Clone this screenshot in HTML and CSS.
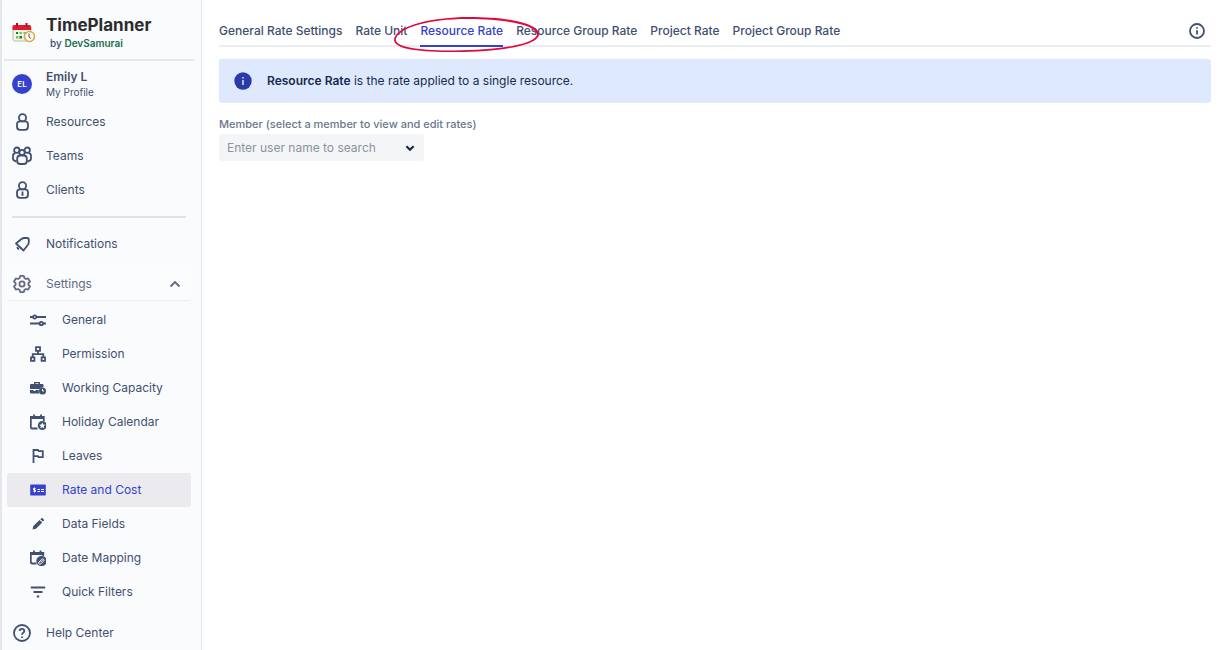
FILE: index.html
```html
<!DOCTYPE html>
<html lang="en">
<head>
  <meta charset="UTF-8" />
  <meta name="viewport" content="width=device-width, initial-scale=1.0"/>
  <title>TimePlanner</title>
  <link rel="stylesheet" href="styles.css">
</head>
<body>
  <div class="app">
    <aside class="sidebar">
      <header class="brand">
        <svg class="icon logo" viewBox="0 0 24 22">
          <rect x="1" y="4" width="18" height="15" rx="1.5" fill="#f5f3ea" stroke="#b9bcae"/>
          <path d="M.5 8V4.500q0-1.500 1.500-1.500h15.500q1.500 0 1.500 1.500V8z" fill="#e0192d"/>
          <path d="M5 1v3.500M14.500 1v3.500" stroke="#a80f20" stroke-width="2"/>
          <path d="M7.500 10h2.500v2H7.500zM11.500 10h2.500v2h-2.500zM4 14h2.500v2.500H4z" fill="#5fd068"/>
          <path d="M4 10h2v2H4zM7.500 14h2.500v2.500H7.500z" fill="#1d7a33"/>
          <circle cx="17.500" cy="14.500" r="5" fill="#fffdf5" stroke="#dda94f" stroke-width="1.600"/>
          <path d="M17 11.500v3.500l2 1.500" fill="none" stroke="#555" stroke-width="1"/>
        </svg>
        <div>
          <h1>TimePlanner</h1>
          <p class="by">by <a href="#">DevSamurai</a></p>
        </div>
      </header>

      <a class="profile" href="#">
        <span class="avatar">EL</span>
        <span class="profile-text">
          <strong>Emily L</strong>
          <small>My Profile</small>
        </span>
      </a>

      <nav class="menu">
        <a href="#">
          <svg class="icon line" viewBox="0 0 20 20"><circle cx="10.500" cy="5.800" r="3.600"/><rect x="5" y="9.300" width="11" height="8.500" rx="3"/></svg>
          Resources
        </a>
        <a href="#">
          <svg class="icon line" viewBox="0 0 20 20"><circle cx="4.800" cy="4.200" r="2.700"/><circle cx="15.200" cy="4.200" r="2.700"/><path d="M4.500 15.500C2 15 1 14 1 12.500V10q0-2.500 2.500-2.800M15.500 15.500c2.500-.5 3.500-1.500 3.500-3V10q0-2.500-2.500-2.800"/><circle cx="10" cy="6.500" r="2.700"/><rect x="5.200" y="9.500" width="9.600" height="8.500" rx="3"/></svg>
          Teams
        </a>
        <a href="#">
          <svg class="icon line" viewBox="0 0 20 20"><circle cx="10.500" cy="5.800" r="3.600"/><rect x="5" y="9.300" width="11" height="8.500" rx="3"/><path d="M10.500 11.500v3M9.500 14.800h2"/></svg>
          Clients
        </a>
      </nav>

      <hr>

      <nav class="menu extra">
        <a href="#">
          <svg class="icon line" viewBox="0 0 20 20"><path stroke-linejoin="round" d="M4 9.500 9.500 5q1.300-1 3-1H15q1.800 0 1.800 1.800V8q0 1.500-.9 2.800L11.500 16.500z"/><path d="M5.200 13.200q.2 1.800 2 2"/></svg>
          Notifications
        </a>
      </nav>

      <button class="settings" type="button" aria-expanded="true">
        <svg class="icon line" viewBox="0 0 20 20"><path stroke-linejoin="round" d="M8.200 1.900h3.600l.6 2.200 1.500.9 2.200-.6 1.900 3.100-1.600 1.600v1.800l1.600 1.600-1.900 3.100-2.200-.6-1.500.9-.6 2.200H8.200l-.6-2.200-1.500-.9-2.200.6L2 12.500l1.600-1.600V9.100L2 7.500l1.900-3.100 2.200.6 1.500-.9z"/><circle cx="10" cy="10" r="2.600"/></svg>
        <span>Settings</span>
        <svg class="icon line chevron" viewBox="0 0 12 12"><path d="m1.500 8.500 4.500-4.500 4.500 4.500"/></svg>
      </button>

      <nav class="menu submenu">
        <a href="#">
          <svg class="icon line" viewBox="0 0 16 16"><path d="M0 5h3M6.500 5H16M0 11.500h9.500M13 11.500h3"/><circle cx="4.700" cy="5" r="1.700"/><circle cx="11.300" cy="11.500" r="1.700"/></svg>
          General
        </a>
        <a href="#">
          <svg class="icon line" viewBox="0 0 16 16"><path d="M6 1.200h4v3.600H6zM1 11.400h3.400v3.400H1zM11.600 11.400H15v3.400h-3.400zM8 4.800v3.400M2.700 11.400V8.200h10.600v3.200"/></svg>
          Permission
        </a>
        <a href="#">
          <svg class="icon solid" viewBox="0 0 16 16"><path d="M4 4V2h6v2h2.500q1 0 1 1v2.200q-2.500-.4-3.900 1.800H0V5q0-1 1-1zM5.500 4h3v-.8h-3zM0 10h3.500v1h2v-1h3.300q-.4 1.800.5 3.500H1q-1 0-1-1z"/><circle cx="12.500" cy="11" r="3.500"/><path class="cut" d="M12.500 9v2h1.600"/></svg>
          Working Capacity
        </a>
        <a href="#">
          <svg class="icon line" viewBox="0 0 16 16"><path d="M7.500 14.500H2q-1.200 0-1.200-1.200V3h13v4M.8 4h13M4 .500V4M11 .500V4"/><circle class="fill" cx="12.300" cy="11.500" r="3.600"/><path class="hole" d="m12.300 8.500 1 1.900 2.100.3-1.600 1.500.4 2.100-1.900-1-1.900 1 .400-2.100-1.600-1.500 2.100-.3z"/></svg>
          Holiday Calendar
        </a>
        <a href="#">
          <svg class="icon line" viewBox="0 0 16 16"><path d="M3.500 15V2H8l.8 1.200h4v6H8.600L8 8.200H3.500"/></svg>
          Leaves
        </a>
        <a class="active" href="#">
          <svg class="icon solid" viewBox="0 0 16 16"><path d="M1 2.500h14q.8 0 .8.800v9.400q0 .8-.8.800H1q-.8 0-.8-.8V3.300q0-.8.800-.8z"/><path class="cut" d="M5.500 6.500H3.500V8h2v1.500h-2M4.500 5.500v5M7.500 7.500h2.500M7.500 9.500h2.500M11 7.500h3M11 9.500h3"/></svg>
          Rate and Cost
        </a>
        <a href="#">
          <svg class="icon solid" viewBox="0 0 16 16"><path d="m2.500 13.500.8-3.600 6.200-6 2.700 2.700-6.200 6.100zM10.300 3.200l1-1q.7-.5 1.400 0l1.100 1.200q.5.700 0 1.300l-.9.900z"/></svg>
          Data Fields
        </a>
        <a href="#">
          <svg class="icon line" viewBox="0 0 16 16"><path d="M6.500 13.500H2q-1.200 0-1.200-1.200V3h12.500v3M.8 4h12.500M4 .500V4M10.500 .500V4"/><circle class="fill" cx="11.500" cy="11" r="4.300"/><path class="cut" d="m9 12 2.700-2.700q1-.8 1.900 0t0 1.800l-2.700 2.700q-1 .7-1.900 0t0-1.800M10.500 12.200l2-2"/></svg>
          Date Mapping
        </a>
        <a href="#">
          <svg class="icon line" viewBox="0 0 16 16"><path d="M.8 3.500h14.400M3.500 8h9M6.800 12.500h2.400"/></svg>
          Quick Filters
        </a>
      </nav>

      <nav class="menu help">
        <a href="#">
          <svg class="icon line" viewBox="0 0 20 20"><circle cx="10" cy="10" r="8"/><path d="M7.700 8q0-2.200 2.300-2.200T12.300 8q0 1.200-1.300 1.900-1 .6-1 1.900M10 13.400v1.500"/></svg>
          Help Center
        </a>
      </nav>
    </aside>

    <main class="content">
      <div class="tabbar">
        <nav class="tabs">
          <a href="#">General Rate Settings</a>
          <a href="#">Rate Unit</a>
          <a class="current" href="#">Resource Rate
            <svg class="ring" viewBox="0 0 146 36"><path fill-rule="evenodd" d="M0 23C1 9 38 0 75 0c38 0 69 6 70 17 0 12-42 18-84 18C27 35 1 33 0 23zM1.700 23C3 31 28 33.500 61 33.500c40 0 82-6 82-16.500C141 8 113 2.200 75 2 39 1.500 3 10 1.700 23z"/></svg>
          </a>
          <a href="#">Resource Group Rate</a>
          <a href="#">Project Rate</a>
          <a href="#">Project Group Rate</a>
        </nav>
        <button class="info" type="button" aria-label="Info">
          <svg class="icon line" viewBox="0 0 16 16"><circle cx="8" cy="8" r="7"/><path d="M8 7.200v4.300M8 4.300v1.500"/></svg>
        </button>
      </div>

      <div class="banner">
        <svg class="icon" viewBox="0 0 18 18"><circle cx="9" cy="9" r="8.700" fill="#2a3aa8"/><path d="M9 8v5M9 5v1.500" stroke="#deebff" stroke-width="1.500"/></svg>
        <p><strong>Resource Rate</strong> is the rate applied to a single resource.</p>
      </div>

      <div class="field">
        <label for="member">Member (select a member to view and edit rates)</label>
        <div class="select">
          <select id="member">
            <option>Enter user name to search</option>
          </select>
          <svg class="icon line" viewBox="0 0 10 10"><path d="m2 3.500 3 3 3-3"/></svg>
        </div>
      </div>
    </main>
  </div>
</body>
</html>
```

FILE: styles.css
```css
* {
  box-sizing: border-box;
}

body {
  margin: 0;
  background: #fff;
  color: #42506f;
  font-family: 'Inter', sans-serif;
  font-size: 12px;
  line-height: 18px;
}

a {
  color: inherit;
  text-decoration: none;
}

h1, p {
  margin: 0;
}

button {
  padding: 0;
  border: none;
  background: none;
  color: inherit;
  font: inherit;
  cursor: pointer;
}

.app {
  display: flex;
  min-height: 100vh;
}

/* Icons */
.icon {
  display: block;
  flex: none;
}

.line {
  fill: none;
  stroke: currentColor;
  stroke-width: 1.8;
}

.solid,
.fill {
  fill: currentColor;
}

.cut {
  fill: none;
  stroke: #fafbfc;
  stroke-width: 1;
}

.hole {
  fill: #fafbfc;
  stroke: none;
}

/* Sidebar */
.sidebar {
  flex: none;
  width: 202px;
  border-left: 2px solid #e6e7ee;
  border-right: 1px solid #e6e7ee;
  background: #fafbfd;
}

.brand {
  display: flex;
  align-items: center;
  gap: 10px;
  height: 61px;
  margin: 0 7px 0 2px;
  padding: 7px 0 0 8px;
  border-bottom: 2px solid #e8e8eb;
}

.logo {
  width: 24px;
  height: 22px;
}

.brand h1 {
  color: #2c2c2c;
  font-size: 17px;
  line-height: 20px;
  font-weight: 700;
}

.by {
  padding-left: 4px;
  font-size: 10px;
  line-height: 16px;
  font-weight: 500;
}

.by a {
  color: #216e4e;
  font-weight: 600;
}

.profile {
  display: flex;
  align-items: center;
  gap: 14px;
  height: 44px;
  padding: 2px 10px 0;
}

.avatar {
  width: 20px;
  height: 20px;
  border-radius: 50%;
  background: #3442cf;
  color: #fff;
  font-size: 8px;
  line-height: 20px;
  font-weight: 600;
  text-align: center;
}

.profile-text {
  display: grid;
}

.profile strong {
  font-size: 12px;
  line-height: 16px;
  font-weight: 600;
}

.profile small {
  font-size: 10px;
  line-height: 14px;
}

.menu a {
  display: flex;
  align-items: center;
  gap: 14px;
  height: 34px;
  padding: 0 10px;
}

.menu .icon,
.settings .icon {
  width: 20px;
  height: 20px;
}

hr {
  height: 2px;
  margin: 9px 15px 9px 10px;
  border: none;
  background: #e2e3e8;
}

.settings {
  display: flex;
  align-items: center;
  gap: 14px;
  width: calc(100% - 15px);
  height: 34px;
  margin: 6px 10px 0 5px;
  padding: 0 10px 0 5px;
  border-bottom: 1px solid #ecedf1;
  border-radius: 3px;
  background: #fbfcfd;
  color: #5f6b84;
  text-align: left;
}

.settings span {
  flex: 1;
}

.settings .chevron {
  width: 12px;
  height: 12px;
}

.submenu {
  padding: 2px 10px 0 5px;
}

.submenu a {
  gap: 16px;
  padding: 0 23px;
  border-radius: 3px;
  white-space: nowrap;
}

.submenu .icon {
  width: 16px;
  height: 16px;
}

.submenu .active {
  background: #ebebef;
  color: #3442cf;
}

.help {
  padding-top: 7px;
}

/* Content */
.content {
  flex: 1;
  min-width: 0;
  padding: 16px 7px 0 17px;
}

.tabbar {
  display: flex;
  justify-content: space-between;
  height: 31px;
  border-bottom: 2px solid #ebecf0;
}

.tabs {
  display: flex;
  gap: 13px;
  font-weight: 500;
  line-height: 30px;
}

.tabs a {
  position: relative;
  height: 31px;
  white-space: nowrap;
}

.tabs .current {
  border-bottom: 2px solid #3442cf;
  color: #3442cf;
}

/* hand-drawn ring over the current tab */
.ring {
  position: absolute;
  top: 1px;
  left: -26px;
  z-index: 1;
  width: 146px;
  height: 36px;
  fill: #e2063c;
  pointer-events: none;
}

.info {
  height: 30px;
  padding-right: 6px;
}

.info .icon {
  width: 16px;
  height: 16px;
}

.banner {
  display: flex;
  align-items: center;
  gap: 15px;
  margin-top: 12px;
  padding: 13px 15px;
  border-radius: 3px;
  background: #dee9fe;
  color: #172b4d;
}

.banner .icon {
  width: 18px;
  height: 18px;
}

.banner strong {
  font-weight: 600;
}

.field {
  margin-top: 13px;
}

.field label {
  display: block;
  color: #6b778c;
  font-size: 11px;
  line-height: 16px;
  font-weight: 500;
}

.select {
  display: grid;
  align-items: center;
  width: 205px;
  margin-top: 2px;
}

.select select,
.select .icon {
  grid-area: 1 / 1;
}

.select select {
  width: 100%;
  height: 27px;
  padding: 0 28px 0 8px;
  border: none;
  border-radius: 3px;
  background: #f4f5f7;
  color: #8993a4;
  font: inherit;
  appearance: none;
}

.select .icon {
  justify-self: end;
  width: 12px;
  height: 12px;
  margin-right: 8px;
  color: #172b4d;
  pointer-events: none;
}
```
